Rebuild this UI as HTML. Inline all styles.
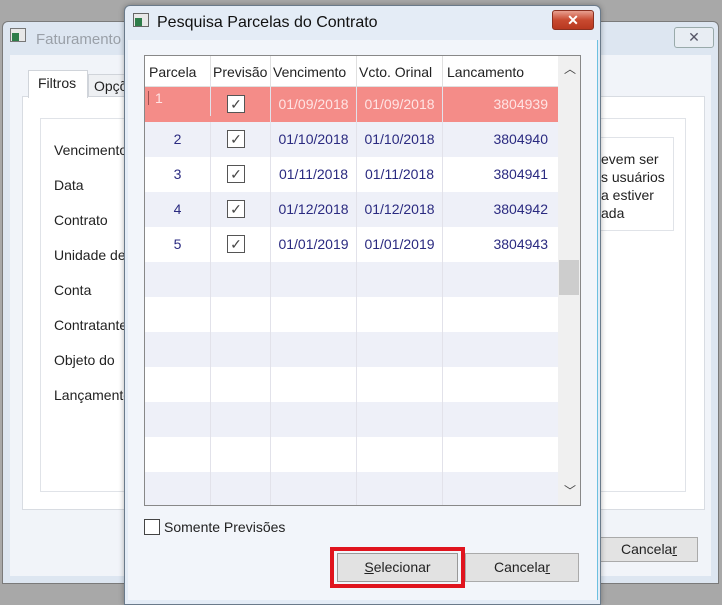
<!DOCTYPE html>
<html><head><style>
*{box-sizing:border-box;margin:0;padding:0}
body{width:722px;height:599px;background:#a8a8a8;position:relative;overflow:hidden;font-family:"Liberation Sans",sans-serif;font-size:14px;color:#222}
.a{position:absolute}
.cell{position:absolute;height:35px;line-height:35px;border-right:1px solid #e2e2ea;color:#2a2a80}
</style></head><body>
<!-- outer window -->
<div class="a" style="left:2px;top:21px;width:717px;height:563px;background:#dde6f1;border:1px solid #7a7a7a;border-radius:6px 6px 0 0"></div>
<div class="a" style="left:10px;top:28px;width:16px;height:14px;border:1px solid #777;background:#e8e8e8"></div>
<div class="a" style="left:12px;top:33px;width:7px;height:8px;background:#2e7d4a"></div>
<div class="a" style="left:36px;top:31px;color:#9aa0a8;font-size:15px">Faturamento</div>
<div class="a" style="left:674px;top:27px;width:40px;height:21px;border:1px solid #9aa;border-radius:3px;background:#e8edf3;text-align:center;line-height:19px;color:#556;font-size:14px">✕</div>
<div class="a" style="left:10px;top:55px;width:701px;height:521px;background:#f1f4f9"></div>
<div class="a" style="left:22px;top:96px;width:683px;height:414px;background:#fff;border:1px solid #d8dce2"></div>
<div class="a" style="left:28px;top:70px;width:60px;height:28px;background:#fff;border:1px solid #d0d4da;border-bottom:none;padding:4px 0 0 9px">Filtros</div>
<div class="a" style="left:88px;top:74px;width:50px;height:23px;background:#eef0f3;border:1px solid #d0d4da;padding:3px 0 0 5px">Opções</div>
<div class="a" style="left:40px;top:118px;width:646px;height:374px;border:1px solid #e0e3e8"></div>
<div class="a" style="left:54px;top:133px;line-height:35px">Vencimento<br>Data<br>Contrato<br>Unidade de<br>Conta<br>Contratante<br>Objeto do<br>Lançamento</div>
<div class="a" style="left:560px;top:137px;width:114px;height:94px;border:1px solid #e0e3e8;padding:12px 0 0 40px;line-height:18px;font-size:14px">evem ser<br>s usuários<br>a estiver<br>ada</div>
<div class="a" style="left:600px;top:537px;width:98px;height:25px;border:1px solid #aaa;background:#e3e3e3;text-align:center;line-height:23px">Cancela<u>r</u></div>
<!-- dialog -->
<div class="a" style="left:124px;top:5px;width:477px;height:600px;background:#e4ecf6;border:1px solid #6a7a8a;border-radius:6px 6px 0 0;box-shadow:0 0 6px rgba(0,0,0,.3)"></div>
<div class="a" style="left:133px;top:13px;width:16px;height:14px;border:1px solid #666;background:#e8e8e8"></div>
<div class="a" style="left:135px;top:18px;width:7px;height:8px;background:#2e7d4a"></div>
<div class="a" style="left:157px;top:14px;font-size:16px;color:#111">Pesquisa Parcelas do Contrato</div>
<div class="a" style="left:552px;top:10px;width:42px;height:20px;border:1px solid #8a3020;border-radius:3px;background:linear-gradient(#e8a090,#c84a30 50%,#b83820);color:#fff;text-align:center;line-height:18px;font-weight:bold">✕</div>
<div class="a" style="left:128px;top:40px;width:470px;height:560px;background:#f2f5fa;border-right:1px solid #6cc0e0"></div>
<!-- grid -->
<div class="a" style="left:144px;top:55px;width:437px;height:451px;border:1px solid #888;background:#fff;overflow:hidden">
 <div class="a" style="left:0;top:0;width:413px;height:31px;background:#fff;border-bottom:1px solid #e0e0e0"></div>
 <div class="a" style="left:4px;top:8px">Parcela</div>
 <div class="a" style="left:68px;top:8px">Previsão</div>
 <div class="a" style="left:128px;top:8px">Vencimento</div>
 <div class="a" style="left:214px;top:8px">Vcto. Orinal</div>
 <div class="a" style="left:302px;top:8px">Lancamento</div>
 <div class="a" style="left:65px;top:0;width:1px;height:31px;background:#e0e0e0"></div>
 <div class="a" style="left:125px;top:0;width:1px;height:31px;background:#e0e0e0"></div>
 <div class="a" style="left:211px;top:0;width:1px;height:31px;background:#e0e0e0"></div>
 <div class="a" style="left:297px;top:0;width:1px;height:31px;background:#e0e0e0"></div>
 <div id="rows"></div>
 <div class="a" style="left:413px;top:0;width:22px;height:451px;background:#f0f0f0"></div>
 <div class="a" style="left:419px;top:4px;color:#444;font-size:12px">︿</div>
 <div class="a" style="left:419px;top:426px;color:#444;font-size:12px">﹀</div>
 <div class="a" style="left:414px;top:204px;width:20px;height:35px;background:#cdcdcd"></div>
</div>
<script>
var d=[["1","01/09/2018","3804939"],["2","01/10/2018","3804940"],["3","01/11/2018","3804941"],["4","01/12/2018","3804942"],["5","01/01/2019","3804943"]];
var h="";
for(var i=0;i<12;i++){var t=31+i*35;var bg=i==0?"#f48c88":(i%2?"#eef0f8":"#fff");
h+='<div class="a" style="left:0;top:'+t+'px;width:413px;height:35px;background:'+bg+'"></div>';
var c=i==0?"#ffe4e4":"#2a2a80";
var r=d[i];
if(i==0)h+='<div class="cell" style="left:0;top:'+(t-6)+'px;width:66px;padding-left:10px;color:'+c+'">1</div><div class="a" style="left:3px;top:'+(t+4)+'px;width:1px;height:14px;background:#a05050"></div>';
else h+='<div class="cell" style="left:0;top:'+t+'px;width:66px;text-align:center;color:'+c+'">'+(r?r[0]:'')+'</div>';
h+='<div class="cell" style="left:66px;top:'+t+'px;width:60px"></div>';
if(r)h+='<div class="a" style="left:82px;top:'+(t+8)+'px;width:18px;height:18px;border:1px solid #555;background:#fff;text-align:center;line-height:16px;color:#444;font-size:14px">✓</div>';
h+='<div class="cell" style="left:126px;top:'+t+'px;width:86px;text-align:center;color:'+c+'">'+(r?r[1]:'')+'</div>';
h+='<div class="cell" style="left:212px;top:'+t+'px;width:86px;text-align:center;color:'+c+'">'+(r?r[1]:'')+'</div>';
h+='<div class="cell" style="left:298px;top:'+t+'px;width:115px;text-align:right;padding-right:10px;border:none;color:'+c+'">'+(r?r[2]:'')+'</div>';}
document.getElementById("rows").innerHTML=h;
</script>
<div class="a" style="left:144px;top:519px;width:16px;height:16px;border:1px solid #444;background:#fff"></div>
<div class="a" style="left:164px;top:519px">Somente Previsões</div>
<div class="a" style="left:330px;top:547px;width:135px;height:41px;border:4px solid #e0141e"></div>
<div class="a" style="left:337px;top:553px;width:121px;height:29px;border:1px solid #999;background:#e2e2e2;text-align:center;line-height:27px"><u>S</u>elecionar</div>
<div class="a" style="left:465px;top:553px;width:114px;height:29px;border:1px solid #aaa;background:#e2e2e2;text-align:center;line-height:27px">Cancela<u>r</u></div>
</body></html>
